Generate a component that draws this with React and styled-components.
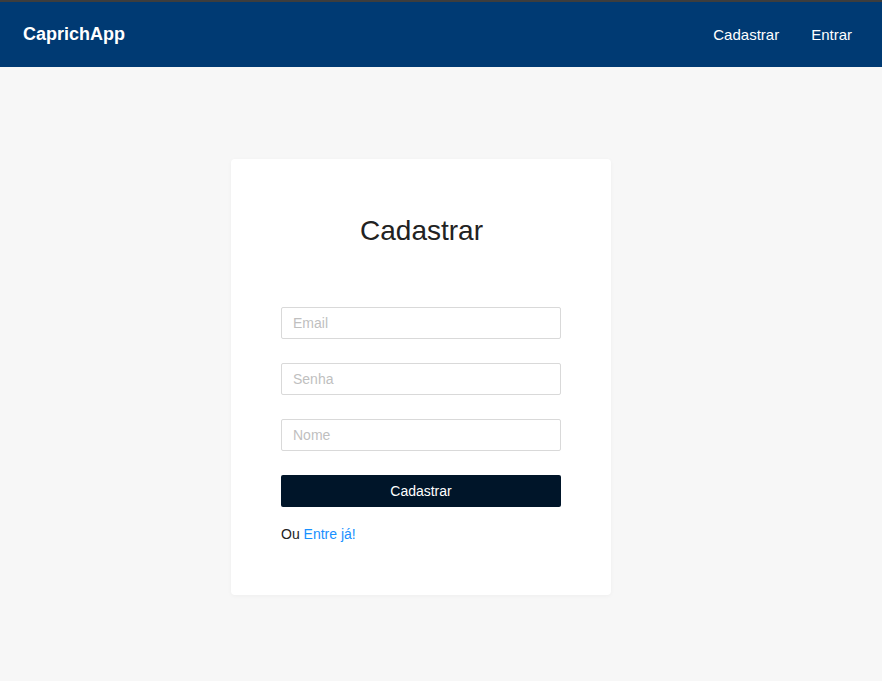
import React from 'react'
import styled, { createGlobalStyle } from 'styled-components'

const GlobalStyle = createGlobalStyle`
    html, body {
        margin: 0;
        padding: 0;
        background: #f7f7f7;
        font-family: "Liberation Sans", Arial, sans-serif;
    }
`;

function App(){
    return (
        <>
            <GlobalStyle />
            <Header>
                <Brand>CaprichApp</Brand>
                <Nav>
                    <NavLink href="#">Cadastrar</NavLink>
                    <NavLink href="#">Entrar</NavLink>
                </Nav>
            </Header>
            <Main>
                <Card>
                    <Title>Cadastrar</Title>
                    <Form onSubmit={(e) => e.preventDefault()}>
                        <Input type="email" placeholder="Email" />
                        <Input type="password" placeholder="Senha" />
                        <Input type="text" placeholder="Nome" />
                        <Button type="submit">Cadastrar</Button>
                    </Form>
                    <Footer>Ou <a href="#">Entre já!</a></Footer>
                </Card>
            </Main>
        </>
    );
}

const Header = styled.header`
    display: flex;
    align-items: center;
    justify-content: space-between;
    height: 65px;
    border-top: 2px solid #3d3d3d;
    background: #003a73;
    padding: 0 30px 0 23px;
`;

const Brand = styled.div`
    color: #fff;
    font-size: 18px;
    font-weight: 700;
`;

const Nav = styled.nav`
    display: flex;
    gap: 32px;
`;

const NavLink = styled.a`
    color: #fff;
    font-size: 15px;
    text-decoration: none;
`;

const Main = styled.main`
    display: flex;
    justify-content: center;
    padding: 92px 0 80px;
    margin-right: 40px;
`;

const Card = styled.div`
    width: 280px;
    padding: 56px 50px 51px;
    background: #fff;
    border-radius: 4px;
    box-shadow: 0 1px 4px rgba(0, 0, 0, 0.04);
`;

const Title = styled.h1`
    margin: 0 0 60px;
    padding-left: 1px;
    font-size: 28px;
    font-weight: 400;
    line-height: 32px;
    text-align: center;
    color: #222;
`;

const Form = styled.form`
    display: flex;
    flex-direction: column;
    gap: 24px;
`;

const Input = styled.input`
    box-sizing: border-box;
    height: 32px;
    padding: 0 11px;
    border: 1px solid #d9d9d9;
    border-radius: 2px;
    font-family: inherit;
    font-size: 14px;
    color: #333;
    outline: none;
    &::placeholder{
        color: #bfbfbf;
    }
`;

const Button = styled.button`
    height: 32px;
    border: none;
    border-radius: 2px;
    background: #001529;
    color: #fff;
    font-family: inherit;
    font-size: 14px;
    cursor: pointer;
`;

const Footer = styled.p`
    margin: 17px 0 0;
    font-size: 14px;
    line-height: 20px;
    color: #222;
    a{
        color: #1890ff;
        text-decoration: none;
    }
`;

export default App
